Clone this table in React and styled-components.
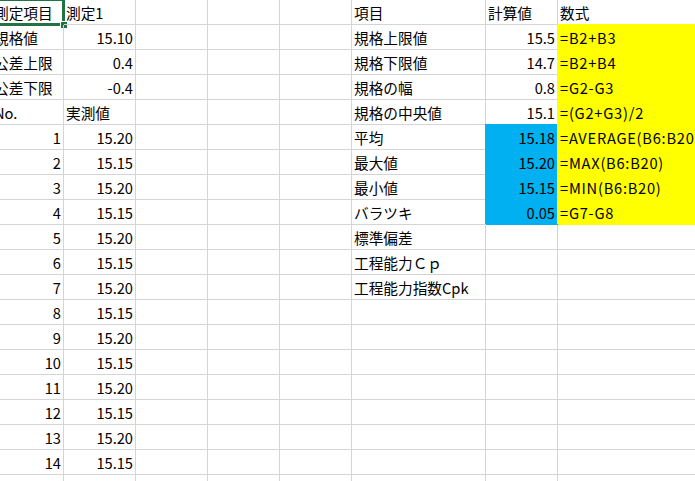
import styled, {createGlobalStyle} from "styled-components";

const GlobalStyle = createGlobalStyle`
  html, body {
    margin: 0;
    padding: 0;
    background: #ffffff;
    overflow: hidden;
  }
`;

const COLS = [72, 72, 72, 72, 72, 134, 72, 160];

const YELLOW = "#ffff00";
const BLUE = "#00b0f0";

// [A, B, F, G, H] per row; G fill: blue rows 6-9, H fill: yellow rows 2-9
const rows = [
  ["測定項目", "測定1", "項目", "計算値", "数式"],
  ["規格値", "15.10", "規格上限値", "15.5", "=B2+B3"],
  ["公差上限", "0.4", "規格下限値", "14.7", "=B2+B4"],
  ["公差下限", "-0.4", "規格の幅", "0.8", "=G2-G3"],
  ["No.", "実測値", "規格の中央値", "15.1", "=(G2+G3)/2"],
  ["1", "15.20", "平均", "15.18", "=AVERAGE(B6:B20)"],
  ["2", "15.15", "最大値", "15.20", "=MAX(B6:B20)"],
  ["3", "15.20", "最小値", "15.15", "=MIN(B6:B20)"],
  ["4", "15.15", "バラツキ", "0.05", "=G7-G8"],
  ["5", "15.20", "標準偏差", "", ""],
  ["6", "15.15", "工程能力Ｃｐ", "", ""],
  ["7", "15.20", "工程能力指数Cpk", "", ""],
  ["8", "15.15", "", "", ""],
  ["9", "15.20", "", "", ""],
  ["10", "15.15", "", "", ""],
  ["11", "15.20", "", "", ""],
  ["12", "15.15", "", "", ""],
  ["13", "15.20", "", "", ""],
  ["14", "15.15", "", "", ""],
  ["15", "15.20", "", "", ""],
];

const isNumber = (v) => /^-?[\d.]+$/.test(v);

export default function App() {
  return (
    <>
      <GlobalStyle />
      <Sheet>
        {rows.map((r, i) => {
          const [a, b, f, g, h] = r;
          const blue = i >= 5 && i <= 8;
          const yellow = i >= 1 && i <= 8;
          return [
            <Cell key={`a${i}`} $right={isNumber(a)}>
              {a}
              {i === 0 && (
                <Selection>
                  <Handle />
                </Selection>
              )}
            </Cell>,
            <Cell key={`b${i}`} $right={isNumber(b)}>{b}</Cell>,
            <Cell key={`c${i}`} />,
            <Cell key={`d${i}`} />,
            <Cell key={`e${i}`} />,
            <Cell key={`f${i}`}>{f}</Cell>,
            <Cell key={`g${i}`} $right={isNumber(g)} $fill={blue ? BLUE : null}>{g}</Cell>,
            <Cell key={`h${i}`} $fill={yellow ? YELLOW : null} $formula={h.startsWith("=")}>
              {h}
            </Cell>,
          ];
        })}
      </Sheet>
    </>
  );
}

const Sheet = styled.div`
  display: grid;
  grid-template-columns: ${COLS.map((c) => c + "px").join(" ")};
  grid-auto-rows: 25px;
  margin-left: -8px;
  font-family: "Noto Sans CJK JP", "Noto Sans", sans-serif;
  font-size: 14.67px;
  color: #000000;
`;

const Cell = styled.div`
  position: relative;
  box-sizing: border-box;
  display: flex;
  align-items: center;
  justify-content: ${(p) => (p.$right ? "flex-end" : "flex-start")};
  padding: 0 2px 0 2px;
  white-space: nowrap;
  letter-spacing: ${(p) => (p.$formula ? "0.75px" : "normal")};
  border-right: 1px solid ${(p) => p.$fill || "#d4d4d4"};
  border-bottom: 1px solid ${(p) => p.$fill || "#d4d4d4"};
  background: ${(p) => p.$fill || "transparent"};
  box-shadow: ${(p) => (p.$fill ? `-1px -1px 0 0 ${p.$fill}` : "none")};
`;

const Selection = styled.div`
  position: absolute;
  left: -2px;
  top: -2px;
  right: -2px;
  bottom: -2px;
  border: 3px solid #217346;
  pointer-events: none;
`;

const Handle = styled.div`
  position: absolute;
  right: -5px;
  bottom: -5px;
  width: 6px;
  height: 6px;
  background: #217346;
  outline: 1px solid #ffffff;
`;
